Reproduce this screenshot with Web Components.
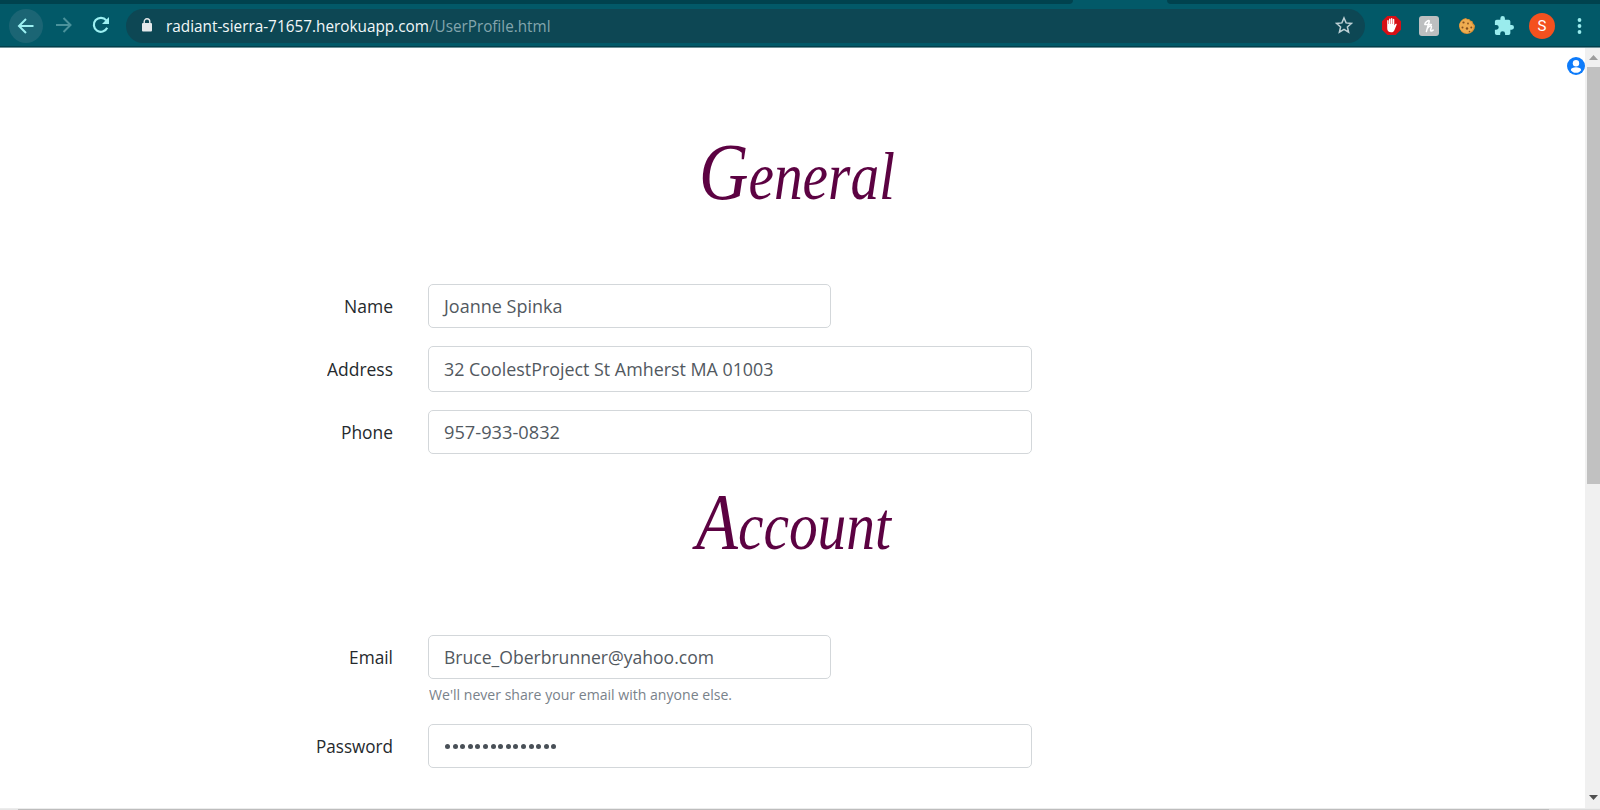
<!DOCTYPE html>
<html lang="en">
<head>
<meta charset="utf-8">
<title>User Profile</title>
<style>
html,body{margin:0;height:100%;overflow:hidden;background:#fff}
body{font-family:"Open Sans","Noto Sans",sans-serif}
</style>
</head>
<body>
<profile-app></profile-app>
<script>
const define = (name, html, extra) => customElements.define(name, class extends HTMLElement {
  connectedCallback() {
    if (!this.shadowRoot) {
      const t = document.createElement('template');
      t.innerHTML = typeof html === 'function' ? html(this) : html;
      this.attachShadow({mode: 'open'}).append(t.content.cloneNode(true));
    }
    if (extra) extra(this);
  }
});

// Text condensed or widened horizontally to the width in its "w" attribute.
define('fit-text', e => `<style>
:host{display:block;flex:none;width:${e.getAttribute('w')}px;white-space:nowrap}
span{display:inline-block;transform-origin:0 50%}
span::first-letter{font-size:var(--cap,1em)}
</style><span><slot></slot></span>`, e => {
  const s = e.shadowRoot.querySelector('span');
  const n = s.offsetWidth;
  if (n) s.style.transform = `scaleX(${e.getAttribute('w') / s.getBoundingClientRect().width})`;
});

define('browser-bar', `<style>
:host{display:block;height:48px;background:#025968;box-sizing:border-box;border-bottom:1px solid #6e9299;box-shadow:inset 0 -1px #033f4b}
.tabs{display:flex;justify-content:space-between;height:4px}
.tabs i{background:#00424e;width:1073px;border-bottom-right-radius:5px}
.tabs i+i{width:433px;border-radius:0 0 0 5px}
.row{display:flex;align-items:center;height:34px;margin-top:5px;padding-left:9px}
svg{display:block;flex:none}
.back{width:34px;height:34px;margin-top:-1px;border-radius:50%;background:#1b6574;display:grid;place-items:center}
.url{display:flex;align-items:center;width:1239px;height:34px;border-radius:17px;background:#0d4754;box-sizing:border-box;padding:0 12px 0 15px;margin-left:15px;font-size:16.5px;color:#f2f8f9}
.row>svg,.url>*{margin-top:-2px}
.host{margin-left:13px}.path{color:#83a5ad}.star{margin-left:auto}
.tools{display:flex;align-items:center;margin:-1px 0 0 16px}
.av{width:26px;height:26px;border-radius:50%;background:#f4511e;color:#fff;font:15px/26px Roboto,sans-serif;text-align:center}
</style>
<div class="tabs"><i></i><i></i></div>
<div class="row">
<div class="back"><svg width="18" height="18" viewBox="0 0 18 18" fill="none" stroke="#9cf0f2" stroke-width="2"><path d="M16.500 9H2.500M9 2L2 9l7 7"/></svg></div>
<svg style="margin-left:12px" width="18" height="18" viewBox="0 0 18 18" fill="none" stroke="#4a929b" stroke-width="2"><path d="M1 9h14M8.500 2l7 7-7 7"/></svg>
<svg style="margin-left:18px" width="20" height="20" viewBox="0 0 20 20"><path d="M16.200 12.800A7 7 0 1 1 15.300 5.400" fill="none" stroke="#9cf0f2" stroke-width="2.200"/><path d="M18 2v7h-7z" fill="#9cf0f2"/></svg>
<div class="url">
<svg width="12" height="14" viewBox="0 0 12 14"><rect x="1" y="5" width="10" height="8.500" rx="1" fill="#e5e9eb"/><path d="M3.200 5.500V3.600a2.800 2.800 0 0 1 5.600 0v1.900" fill="none" stroke="#e5e9eb" stroke-width="1.400"/></svg>
<fit-text class="host" w="263">radiant-sierra-71657.herokuapp.com</fit-text><fit-text class="path" w="121.500">/UserProfile.html</fit-text>
<svg class="star" width="18" height="18" viewBox="0 0 18 18"><path d="M9 2l2.100 4.900 5.300.5-4 3.500 1.200 5.200L9 13.300l-4.600 2.800 1.200-5.200-4-3.500 5.300-.5z" fill="none" stroke="#bdd0d5" stroke-width="1.500"/></svg>
</div>
<div class="tools">
<svg width="21" height="21" viewBox="0 0 21 21"><path d="M6.300 1h8.400L20 6.300v8.400L14.700 20H6.300L1 14.700V6.300z" fill="#d60f16"/><path d="M6.200 10V5.700c0-1 1.400-1 1.400 0V9h.4V4.300c0-1 1.500-1 1.500 0V9h.4V3.700c0-1 1.500-1 1.500 0V9h.4V4.600c0-1 1.500-1 1.500 0v6l1-1.500c.7-.9 1.800-.4 1.400.5l-2.100 5.100c-.8 1.900-1.700 2.600-3.400 2.600-2.600 0-4-1.400-4-4z" fill="#fff"/></svg>
<svg style="margin-left:17px" width="20" height="20" viewBox="0 0 20 20"><rect width="20" height="20" rx="3" fill="#bdbfc0"/><path d="M6 7.300C7.500 5 11 3.500 10.200 5.500L7.400 15.500M5.800 8.600h6.500M8.300 12.500c1.500-2.500 4.700-3.500 4.100-1.400l-.8 2.900c-.2 1.400 1.300 1.300 2.500.1" fill="none" stroke="#fff" stroke-width="1.500" stroke-linecap="round"/></svg>
<svg style="margin-left:19px" width="18" height="18" viewBox="0 0 18 18"><path d="M8 1c1 1.500 2 .8 3.600 1.200.3 1.800 2.100 1 3.200 2.600-.5 1.700 1.700 2.200 2.200 4.200A8 8 0 1 1 8 1z" fill="#dc9235"/><path d="M8 2c1.500 1.600 2 .7 3 1.200.5 1.800 2 1.200 2.600 2-.3 2 1.500 2.400 2 4A7 7 0 1 1 8 2z" fill="#efad50"/><g fill="#85501f"><circle cx="5.500" cy="5.500" r="1.100"/><circle cx="10" cy="6.500" r=".9"/><circle cx="4.500" cy="10.500" r="1"/><circle cx="9" cy="11.500" r="1.200"/><circle cx="13.300" cy="10.500" r="1"/><circle cx="11.500" cy="14.500" r=".8"/></g></svg>
<svg style="margin-left:18px" width="20" height="20" viewBox="1 1 22 22"><path d="M20.500 11H19V7a2 2 0 0 0-2-2h-4V3.500a2.500 2.500 0 0 0-5 0V5H4a2 2 0 0 0-2 2v3.800h1.500a2.700 2.700 0 0 1 0 5.400H2V20a2 2 0 0 0 2 2h3.800v-1.500a2.700 2.700 0 0 1 5.400 0V22H17a2 2 0 0 0 2-2v-4h1.500a2.500 2.500 0 0 0 0-5z" fill="#9aeced"/></svg>
<div class="av" style="margin-left:15px">S</div>
<svg style="margin-left:22px" width="5" height="18" viewBox="0 0 5 18" fill="#9aeced"><circle cx="2.500" cy="3" r="1.900"/><circle cx="2.500" cy="9" r="1.900"/><circle cx="2.500" cy="15" r="1.900"/></svg>
</div></div>`);

define('section-title', `<style>
:host{display:flex;height:80px;color:#5c0242;font:italic 67px/80px "Liberation Serif",serif;--cap:80px}
</style><slot></slot>`);

define('form-row', e => {
  const h = +(e.getAttribute('h') || 44);
  return `<style>
:host{display:grid;grid-template:${h}px/393px 1fr;column-gap:35px;font-size:18px;line-height:${h}px;color:#25292d}
.l{display:flex;justify-content:flex-end}
.box{display:flex;align-items:center;box-sizing:border-box;width:${e.hasAttribute('short') ? 403 : 604}px;height:${h}px;border:1px solid #d3d7da;border-radius:5px;padding-left:15px;line-height:${h - 2}px;color:#52595f;background:#fff}
</style><div class="l"><slot name="label"></slot></div><div class="box"><slot></slot></div>`;
});

define('password-dots', `<style>:host{display:flex;gap:2.600px;padding-left:1px;margin-top:1px}i{width:5px;height:5px;border-radius:50%;background:#495057}</style>${'<i></i>'.repeat(15)}`);

define('scroll-bar', `<style>
:host{display:flex;flex-direction:column;width:15px;background:#f0f0f0;align-items:flex-end}
.up{height:19px;width:13px;display:grid;place-items:center}
.thumb{width:13px;height:417px;background:#c1c1c1}
.down{margin:auto 0 6px;width:13px;height:10px;display:grid;place-items:center}
svg{display:block}
</style><div class="up"><svg width="9" height="5"><path d="M0 5l4.500-5L9 5z" fill="#9d9d9d"/></svg></div><div class="thumb"></div><div class="down"><svg width="9" height="5"><path d="M0 0h9L4.500 5z" fill="#505050"/></svg></div>`);

define('profile-page', `<style>
:host{display:flex;min-height:0}
main{flex:1;display:flex;flex-direction:column;padding-top:9px;min-width:0}
.user{align-self:flex-end}
section-title{margin-left:699px}
.hint{font-size:14.500px;line-height:20px;color:#79828a;margin:6px 0 0 429px}
</style>
<main>
<svg class="user" width="18" height="18" viewBox="0 0 18 18"><circle cx="9" cy="9" r="9" fill="#0d7bfa"/><circle cx="9" cy="6.200" r="3.200" fill="#fff"/><path d="M3.800 13.200c0-3.800 10.400-3.800 10.400 0-1.300 1.600-3 2.600-5.200 2.600s-3.900-1-5.200-2.600z" fill="#fff"/></svg>
<section-title style="margin-top:57px"><fit-text w="196">General</fit-text></section-title>
<form-row short style="margin-top:72px"><fit-text slot="label" w="49">Name</fit-text><fit-text w="118.500">Joanne Spinka</fit-text></form-row>
<form-row h="46" style="margin-top:18px"><fit-text slot="label" w="66">Address</fit-text><fit-text w="329.500">32 CoolestProject St Amherst MA 01003</fit-text></form-row>
<form-row style="margin-top:18px"><fit-text slot="label" w="52">Phone</fit-text><fit-text w="116">957-933-0832</fit-text></form-row>
<section-title style="margin:28px 0 0 696px"><fit-text w="195">Account</fit-text></section-title>
<form-row short style="margin-top:73px"><fit-text slot="label" w="44">Email</fit-text><fit-text w="270">Bruce_Oberbrunner@yahoo.com</fit-text></form-row>
<div class="hint"><fit-text w="303">We'll never share your email with anyone else.</fit-text></div>
<form-row style="margin-top:19px"><fit-text slot="label" w="77">Password</fit-text><password-dots></password-dots></form-row>
</main>
<scroll-bar></scroll-bar>`);

define('profile-app', `<style>
:host{display:flex;flex-direction:column;height:810px;width:1600px}
browser-bar{flex:none}profile-page{flex:1}
footer{flex:none;height:2px;background:linear-gradient(90deg,#e6e6e6 18px,#bdbdbd 18px 1549px,#dcdcdc 1549px) 0 1px/100% 1px no-repeat #ececec}
</style><browser-bar></browser-bar><profile-page></profile-page><footer></footer>`);
</script>
</body>
</html>
